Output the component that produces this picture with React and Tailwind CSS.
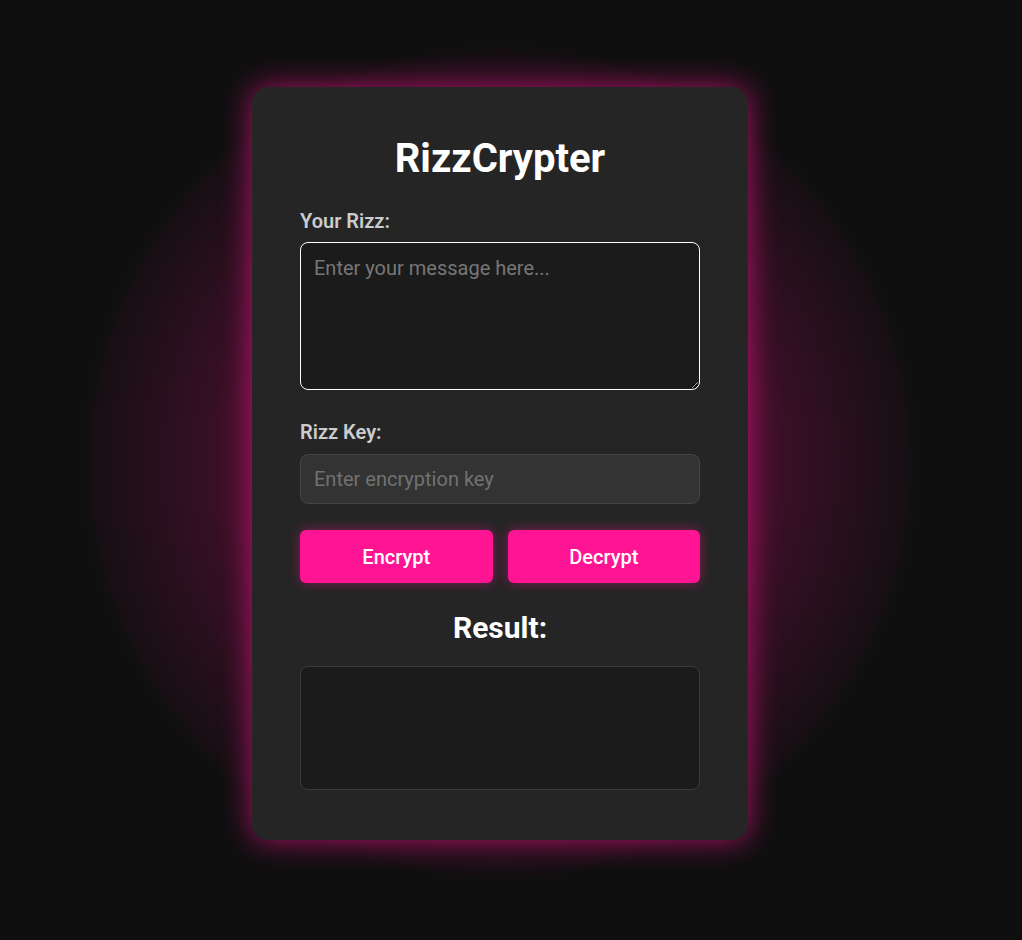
export default function App() {
  return (
    <div
      className="relative min-h-screen w-full overflow-hidden bg-[#0f0f0f]"
      style={{ fontFamily: "Roboto, 'Liberation Sans', sans-serif" }}
    >
      <div className="relative w-[1000px] h-[940px] flex justify-center items-start pt-[87px]">
        <div className="pointer-events-none absolute left-[80px] top-[43px] w-[840px] h-[840px] rounded-full bg-[radial-gradient(circle_closest-side,rgba(255,20,147,0.55)_0%,rgba(255,20,147,0.32)_45%,rgba(255,20,147,0.16)_70%,rgba(255,20,147,0.04)_96%,rgba(255,20,147,0)_100%)]" />
        <div className="relative w-[496px] rounded-2xl bg-[#252525] px-12 pt-12 pb-[50px] shadow-[0_0_30px_rgba(255,20,147,0.65)]">
          <h1 className="text-center text-[40px] leading-[47px] font-bold text-white">
            RizzCrypter
          </h1>
          <label className="block mt-[28px] mb-[9px] text-[20px] leading-[23px] font-semibold text-[#cccccc]">
            Your Rizz:
          </label>
          <textarea
            autoFocus
            placeholder="Enter your message here..."
            className="block w-full h-[148px] rounded-lg border border-white bg-[#1b1b1b] px-[13px] pt-[14px] text-[20px] leading-[23px] text-white caret-white outline-none placeholder:text-[#777777]"
          />
          <label className="block mt-[31px] mb-[10px] text-[20px] leading-[23px] font-semibold text-[#cccccc]">
            Rizz Key:
          </label>
          <input
            type="text"
            placeholder="Enter encryption key"
            className="block w-full h-[50px] rounded-lg border border-[#444444] bg-[#333333] px-[13px] text-[20px] leading-[23px] text-white outline-none placeholder:text-[#717171]"
          />
          <div className="mt-[26px] grid grid-cols-2 gap-[15px]">
            <button className="h-[53px] rounded-md bg-[#ff1493] text-[20px] font-medium text-white shadow-[0_0_12px_rgba(255,20,147,0.45)]">
              Encrypt
            </button>
            <button className="h-[53px] rounded-md bg-[#ff1493] text-[20px] font-medium text-white shadow-[0_0_12px_rgba(255,20,147,0.45)]">
              Decrypt
            </button>
          </div>
          <h2 className="mt-[27px] mb-[21px] text-center text-[30px] leading-[35px] font-bold text-white">
            Result:
          </h2>
          <div className="h-[124px] w-full rounded-lg border border-[#3a3a3a] bg-[#1b1b1b]" />
        </div>
      </div>
    </div>
  );
}
